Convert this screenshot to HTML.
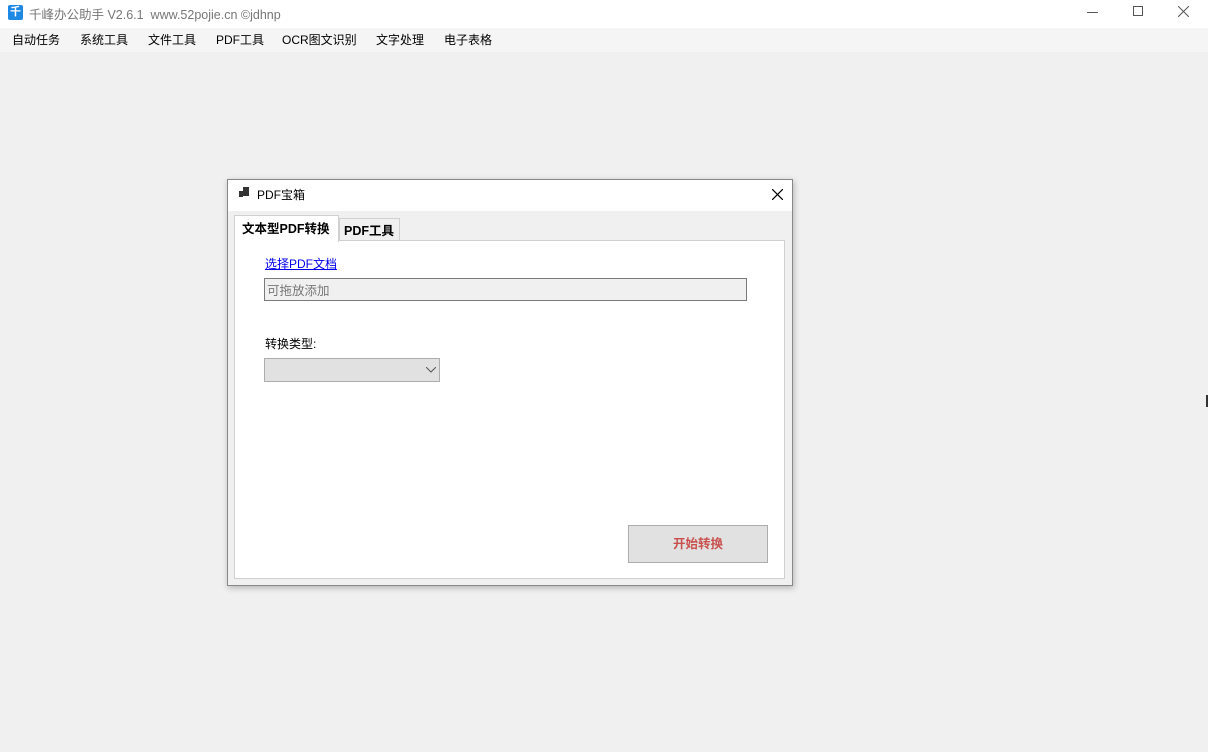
<!DOCTYPE html>
<html><head><meta charset="utf-8"><style>
*{margin:0;padding:0;box-sizing:border-box}
body{width:1208px;height:752px;background:#f0f0f0;position:relative;overflow:hidden;font-family:"Liberation Sans","Noto Sans CJK SC",sans-serif;font-size:12px;color:#000}
.abs{position:absolute}
#title{left:0;top:0;width:1208px;height:28px;background:#fff}
#menu{left:0;top:28px;width:1208px;height:24px;background:#f5f5f5}
#menu span{position:absolute;top:3px;font-size:12px}
</style></head><body>
<div id="title" class="abs">
 <div class="abs" style="left:8px;top:5px;width:15px;height:15px;background:#1e88e5;border-radius:2px;color:#fff;font-size:11px;line-height:15px;text-align:center;font-weight:bold">千</div>
 <div class="abs" style="left:29px;top:4px;color:#777;font-size:12.5px">千峰办公助手 V2.6.1&nbsp;&nbsp;www.52pojie.cn ©jdhnp</div>
 <div class="abs" style="left:1087px;top:12px;width:11px;height:1px;background:#555"></div>
 <div class="abs" style="left:1133px;top:6px;width:10px;height:10px;border:1px solid #555"></div>
 <svg class="abs" style="left:1178px;top:6px" width="11" height="11"><path d="M0 0L11 11M11 0L0 11" stroke="#555" stroke-width="1"/></svg>
</div>
<div id="menu" class="abs">
 <span style="left:12px">自动任务</span><span style="left:80px">系统工具</span><span style="left:148px">文件工具</span><span style="left:216px">PDF工具</span><span style="left:282px">OCR图文识别</span><span style="left:376px">文字处理</span><span style="left:444px">电子表格</span>
</div>
<div class="abs" style="left:1206px;top:395px;width:2px;height:12px;background:#333"></div>
<div class="abs" style="left:227px;top:179px;width:566px;height:407px;background:#f0f0f0;border:1px solid #888;box-shadow:1px 2px 6px rgba(0,0,0,.25)">
 <div class="abs" style="left:0;top:0;width:564px;height:31px;background:#fff"></div>
 <div class="abs" style="left:11px;top:11px;width:4px;height:6px;background:#333"></div>
 <div class="abs" style="left:15px;top:7px;width:6px;height:9px;background:#333"></div>
 <div class="abs" style="left:29px;top:6px;font-size:12px">PDF宝箱</div>
 <svg class="abs" style="left:544px;top:9px" width="11" height="11"><path d="M0 0L11 11M11 0L0 11" stroke="#000" stroke-width="1.2"/></svg>
 <div class="abs" style="left:111px;top:38px;width:61px;height:22px;background:#f0f0f0;border:1px solid #d0d0d0;border-bottom:none;font-weight:bold;font-size:12.5px;padding:1px 0 0 4px">PDF工具</div>
 <div class="abs" style="left:6px;top:60px;width:551px;height:339px;background:#fff;border:1px solid #d0d0d0"></div>
 <div class="abs" style="left:6px;top:35px;width:105px;height:27px;background:#fff;border:1px solid #d0d0d0;border-bottom:none;font-weight:bold;font-size:12.5px;padding:2px 0 0 7px">文本型PDF转换</div>
 <div class="abs" style="left:37px;top:75px;color:#0000ee;text-decoration:underline">选择PDF文档</div>
 <div class="abs" style="left:36px;top:98px;width:483px;height:23px;background:#f0f0f0;border:1px solid #7a7a7a;color:#777;padding:1px 0 0 2px;font-size:12.5px">可拖放添加</div>
 <div class="abs" style="left:37px;top:155px">转换类型:</div>
 <div class="abs" style="left:36px;top:178px;width:176px;height:24px;background:#e1e1e1;border:1px solid #adadad"></div>
 <svg class="abs" style="left:198px;top:187px" width="10" height="6"><path d="M0 0L5 5L10 0" stroke="#555" fill="none"/></svg>
 <div class="abs" style="left:400px;top:345px;width:140px;height:38px;background:#e1e1e1;border:1px solid #adadad;color:#c9504d;text-align:center;line-height:36px;font-size:12.5px;font-weight:bold">开始转换</div>
</div>
</body></html>
